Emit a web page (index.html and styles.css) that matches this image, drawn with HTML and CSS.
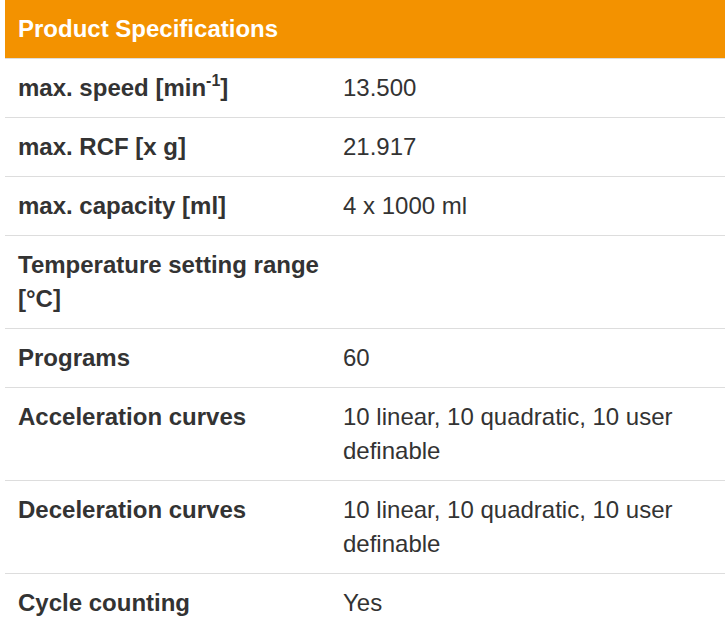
FILE: index.html
```html
<!DOCTYPE html>
<html>
<head>
<meta charset="utf-8">
<link rel="stylesheet" href="styles.css">
</head>
<body>
<div class="specs">
  <div class="specs-head">Product Specifications</div>
  <table class="specs-table">
    <tbody>
      <tr><th>max. speed [min<sup>-1</sup>]</th><td>13.500</td></tr>
      <tr><th>max. RCF [x g]</th><td>21.917</td></tr>
      <tr><th>max. capacity [ml]</th><td>4 x 1000 ml</td></tr>
      <tr><th>Temperature setting range [°C]</th><td></td></tr>
      <tr><th>Programs</th><td>60</td></tr>
      <tr><th>Acceleration curves</th><td>10 linear, 10 quadratic, 10 user definable</td></tr>
      <tr><th>Deceleration curves</th><td>10 linear, 10 quadratic, 10 user definable</td></tr>
      <tr><th>Cycle counting</th><td>Yes</td></tr>
    </tbody>
  </table>
</div>
</body>
</html>
```
FILE: styles.css
```css
html, body {
  margin: 0;
  padding: 0;
  background: #fff;
}
body {
  font-family: "Liberation Sans", Arial, sans-serif;
  font-size: 24px;
  line-height: 34px;
  color: #333;
}
.specs {
  margin-left: 5px;
  width: 730px;
}
.specs-head {
  background: #f39200;
  color: #fff;
  font-weight: bold;
  padding: 12px 13px;
  border-bottom: 1px solid #ddd;
}
.specs-table {
  border-collapse: collapse;
  width: 100%;
}
.specs-table th,
.specs-table td {
  text-align: left;
  vertical-align: top;
  padding: 12px 13px;
  border-bottom: 1px solid #ddd;
}
.specs-table th {
  width: 312px;
  padding-right: 0;
  font-weight: bold;
}
.specs-table td {
  padding-right: 50px;
}
.specs-table sup {
  font-size: 16px;
  line-height: 0;
  vertical-align: 10px;
}
```
